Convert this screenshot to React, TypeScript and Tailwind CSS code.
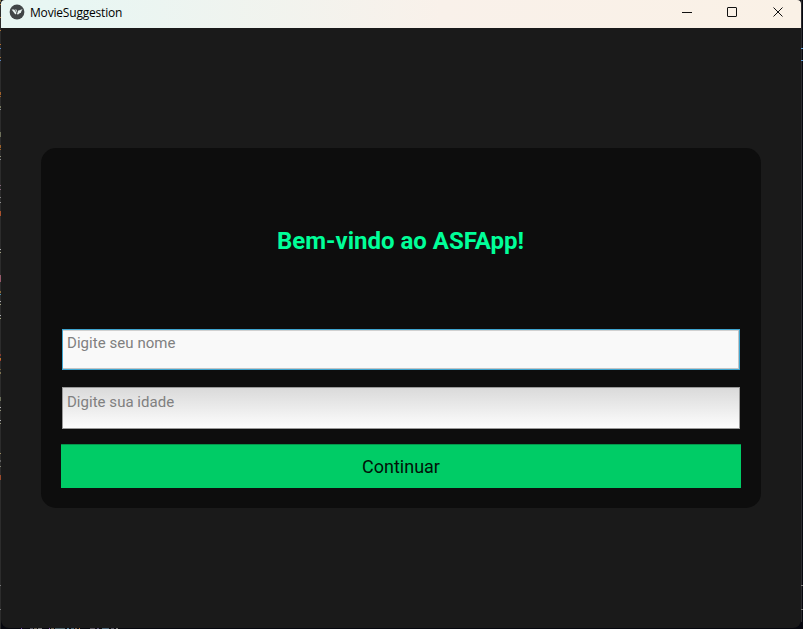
import React from "react";

type Mark = { y: number; h: number; color: string };

const leftMarks: Mark[] = [
  { y: 0, h: 2, color: "#8a7a50" },
  { y: 4, h: 1, color: "#b87a35" },
  { y: 17, h: 1, color: "#c08a4a" },
  { y: 30, h: 1, color: "#b07838" },
  { y: 44, h: 1, color: "#b36b2c" },
  { y: 48, h: 1, color: "#5c86c4" },
  { y: 57, h: 1, color: "#a8743a" },
  { y: 60, h: 1, color: "#5c86c4" },
  { y: 92, h: 3, color: "#a0602a" },
  { y: 96, h: 1, color: "#a0602a" },
  { y: 106, h: 2, color: "#75775f" },
  { y: 109, h: 1, color: "#8a8a8a" },
  { y: 132, h: 5, color: "#6d705a" },
  { y: 145, h: 3, color: "#9a5f2a" },
  { y: 149, h: 1, color: "#9a5f2a" },
  { y: 156, h: 1, color: "#8d8d78" },
  { y: 159, h: 1, color: "#8d8d8d" },
  { y: 185, h: 1, color: "#85657a" },
  { y: 189, h: 1, color: "#85657a" },
  { y: 197, h: 1, color: "#808080" },
  { y: 202, h: 1, color: "#909090" },
  { y: 211, h: 5, color: "#a9522e" },
  { y: 249, h: 1, color: "#b0b0b0" },
  { y: 252, h: 1, color: "#a0a080" },
  { y: 275, h: 7, color: "#96596a" },
  { y: 291, h: 2, color: "#8a6a3a" },
  { y: 294, h: 1, color: "#4c93ad" },
  { y: 301, h: 1, color: "#b0b0b0" },
  { y: 304, h: 1, color: "#a0a080" },
  { y: 315, h: 1, color: "#b0b0b0" },
  { y: 318, h: 1, color: "#a0a080" },
  { y: 354, h: 2, color: "#83392e" },
  { y: 358, h: 2, color: "#bd702d" },
  { y: 360, h: 1, color: "#a9422e" },
  { y: 369, h: 1, color: "#6f5c3a" },
  { y: 372, h: 2, color: "#7d7350" },
  { y: 397, h: 4, color: "#6d705a" },
  { y: 407, h: 1, color: "#b0b0b0" },
  { y: 410, h: 1, color: "#909078" },
  { y: 420, h: 1, color: "#b0b0b0" },
  { y: 423, h: 1, color: "#909078" },
  { y: 453, h: 1, color: "#9a8a60" },
  { y: 460, h: 2, color: "#606060" },
  { y: 466, h: 1, color: "#808070" },
  { y: 475, h: 5, color: "#9b4a2c" },
  { y: 585, h: 1, color: "#777777" },
  { y: 609, h: 1, color: "#777777" },
];

const rightMarks: Mark[] = [
  { y: 48, h: 1, color: "#5b9bd5" },
  { y: 60, h: 1, color: "#5b9bd5" },
  { y: 585, h: 1, color: "#777777" },
  { y: 609, h: 1, color: "#777777" },
];

const bottomMarks: [number, number, string][] = [
  [21, 1, "#7048a8"],
  [30, 3, "#555562"],
  [34, 3, "#655f55"],
  [38, 4, "#77777a"],
  [49, 1, "#8b59b3"],
  [51, 3, "#6c6250"],
  [55, 10, "#4e626b"],
  [67, 2, "#567f9b"],
  [71, 3, "#466174"],
  [75, 2, "#78624f"],
  [79, 1, "#b27c42"],
  [90, 5, "#55515c"],
  [97, 2, "#5d5877"],
  [102, 7, "#4f6678"],
  [111, 3, "#555562"],
  [116, 2, "#777777"],
];

function Backdrop() {
  return (
    <>
      {leftMarks.map((m) => (
        <i key={"l" + m.y} className="absolute left-0 w-px" style={{ top: m.y, height: m.h, background: m.color }} />
      ))}
      {rightMarks.map((m) => (
        <i key={"r" + m.y} className="absolute right-0 w-[2px]" style={{ top: m.y, height: m.h, background: m.color }} />
      ))}
      {bottomMarks.map(([x, w, color]) => (
        <i key={"b" + x} className="absolute bottom-0 h-px" style={{ left: x, width: w, background: color }} />
      ))}
    </>
  );
}

function TitleBar() {
  return (
    <header className="flex h-7 shrink-0 items-start bg-linear-to-r from-[#e8f6f3] from-10% via-[#f9f1ea] via-55% to-[#faf1e6]">
      <svg className="mt-[4px] ml-2 h-4 w-4" viewBox="0 0 16 16">
        <circle cx="8" cy="8" r="7.4" fill="#414547" />
        <path d="M2.6 5.4 L5.2 5.4 L7.6 8.9 L6.4 10.6 Z" fill="#e9f3f1" />
        <path d="M5.9 5.4 L7.4 5.4 L8.3 7.2 L7.8 8.2 Z" fill="#c9d3d1" />
        <path d="M8 9.8 L9.5 6.2 L11 6.3 L12 5.4 L13.7 5.6 L12.5 6.8 L11.9 8.8 L10.2 9.4 L8.9 10.8 Z" fill="#e9f3f1" />
      </svg>
      <span className="mt-[4px] ml-[5px] font-['Open_Sans',sans-serif] text-[12px] leading-[17px] tracking-[-0.19px] text-black">
        MovieSuggestion
      </span>
      <svg className="ml-auto h-6 w-[138px]" viewBox="0 0 138 24" fill="none" stroke="#111">
        <path d="M19 12.5H29" />
        <rect x="64.5" y="7.5" width="9" height="9" rx="0.5" />
        <path d="M110.5 7.5L119.5 16.5M119.5 7.5L110.5 16.5" />
      </svg>
    </header>
  );
}

export default function App() {
  return (
    <div className="relative h-[629px] w-[803px] overflow-hidden bg-[#07080f] font-['Roboto',sans-serif]">
      <div className="absolute top-0 left-0 h-full w-px bg-[#2c2c2c]" />
      <div className="absolute top-0 left-[801px] h-[622px] w-px bg-[#2c2c30]" />
      <Backdrop />
      <div className="relative ml-px flex h-[628px] w-[800px] flex-col overflow-hidden rounded-t-[4px] rounded-b-[8px] bg-[#1a1a1a]">
        <TitleBar />
        <main className="flex flex-1 flex-col px-10 pt-[120px]">
          <section className="flex h-[360px] flex-col rounded-[15px] bg-[#0d0d0d] px-5">
            <h1 className="mt-[77px] pr-px text-center text-[24px] leading-8 font-bold text-[#00ff99]">
              Bem-vindo ao ASFApp!
            </h1>
            <input
              className="mx-px mt-[72px] h-[41px] shrink-0 rounded-none border border-[#3fa5d0] bg-[#f9f9f9] px-1 pt-[4px] pb-[17px] text-[15px] leading-[18px] tracking-[0.05px] shadow-[inset_-1px_-1px_0_#c4c4c4,inset_0_1px_0_#d0d0d0] outline-none placeholder:text-[#808080] placeholder:opacity-100"
              placeholder="Digite seu nome"
            />
            <input
              className="mx-px mt-[17px] h-[42px] shrink-0 rounded-none border border-[#999] bg-linear-to-b from-[#dadada] to-[#fdfdfd] px-1 pt-[5px] pb-[17px] text-[15px] leading-[18px] tracking-[0.03px] outline-none placeholder:text-[#808080] placeholder:opacity-100"
              placeholder="Digite sua idade"
            />
            <button className="mt-[15px] h-11 shrink-0 border-t border-[#05964c] bg-[#00cc66] text-[18px] text-[#001208]">
              Continuar
            </button>
          </section>
        </main>
      </div>
    </div>
  );
}
